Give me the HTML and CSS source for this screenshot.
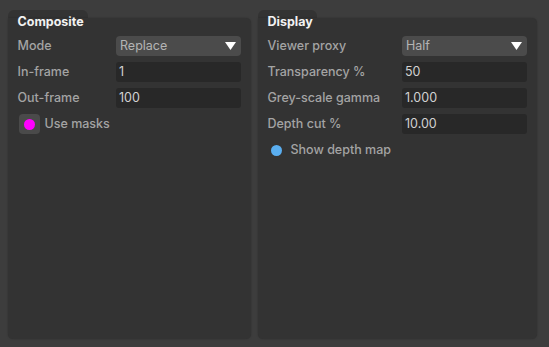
FILE: index.html
```html
<!DOCTYPE html>
<html>
<head>
<meta charset="utf-8">
<link rel="stylesheet" href="styles.css">
</head>
<body>
<div class="wrap">
  <section class="group group-left">
    <div class="tab tab-left"></div>
    <div class="panel">
      <div class="title">Composite</div>
      <div class="rows">
        <div class="row"><span class="label">Mode</span>
          <div class="select"><span>Replace</span>
            <svg class="arrow" width="11" height="8" viewBox="0 0 11 8"><polygon points="0,0 11,0 5.5,8" fill="#ffffff"/></svg>
          </div>
        </div>
        <div class="row"><span class="label">In-frame</span><div class="field">1</div></div>
        <div class="row"><span class="label">Out-frame</span><div class="field">100</div></div>
        <div class="row check-row">
          <span class="checkbox"><span class="dot magenta"></span></span>
          <span class="label">Use masks</span>
        </div>
      </div>
    </div>
  </section>
  <section class="group group-right">
    <div class="tab tab-right"></div>
    <div class="panel">
      <div class="title">Display</div>
      <div class="rows">
        <div class="row"><span class="label">Viewer proxy</span>
          <div class="select"><span>Half</span>
            <svg class="arrow" width="11" height="8" viewBox="0 0 11 8"><polygon points="0,0 11,0 5.5,8" fill="#ffffff"/></svg>
          </div>
        </div>
        <div class="row"><span class="label">Transparency %</span><div class="field">50</div></div>
        <div class="row"><span class="label">Grey-scale gamma</span><div class="field">1.000</div></div>
        <div class="row"><span class="label">Depth cut %</span><div class="field">10.00</div></div>
        <div class="row radio-row">
          <span class="dot blue"></span>
          <span class="label">Show depth map</span>
        </div>
      </div>
    </div>
  </section>
</div>
</body>
</html>
```
FILE: styles.css
```css
html, body {
  margin: 0;
  padding: 0;
  background: #3d3d3d;
  width: 549px;
  height: 347px;
  overflow: hidden;
  font-family: Inter, "Liberation Sans", sans-serif;
  font-size: 12.5px;
}
.wrap {
  display: flex;
  gap: 7px;
  padding: 9.5px 12px 0 8px;
  height: 347px;
  box-sizing: border-box;
}
.group {
  display: flex;
  flex-direction: column;
  height: 329px;
}
.group-left { width: 243px; }
.group-right { width: 279px; }
.tab {
  height: 8px;
  background: #333333;
  border-radius: 6px 6px 0 0;
  flex: none;
}
.tab-left { width: 80px; }
.tab-right { width: 59px; }
.panel {
  flex: 1;
  background: #333333;
  border-radius: 0 5px 5px 5px;
  padding: 0 10px 0 9.5px;
  box-shadow: 0 0 2px rgba(0,0,0,0.25);
}
.title {
  margin-top: -4px;
  height: 16px;
  line-height: 16px;
  color: #f2f2f2;
  font-weight: 700;
}
.rows {
  margin-top: 6.5px;
  display: flex;
  flex-direction: column;
  gap: 6px;
}
.row {
  display: flex;
  align-items: center;
  height: 20px;
}
.label {
  flex: 1;
  color: #a4a4a4;
  font-weight: 500;
  line-height: 20px;
}
.select, .field {
  width: 125px;
  height: 20px;
  box-sizing: border-box;
  line-height: 20px;
  color: #d2d2d2;
}
.select {
  display: flex;
  align-items: center;
  justify-content: space-between;
  background: #4b4b4b;
  border-radius: 4px;
  padding: 0 5px 0 4px;
  color: #b4b4b4;
}
.field {
  background: #282828;
  border-radius: 3px;
  padding: 0 3px;
}
.check-row .checkbox {
  width: 21px;
  height: 20px;
  margin-left: 1px;
  margin-right: 5px;
  background: #4a4a4a;
  border-radius: 4px;
  display: flex;
  align-items: center;
  justify-content: center;
}
.dot {
  width: 11px;
  height: 11px;
  border-radius: 50%;
  display: block;
}
.magenta { background: #ff00ff; }
.blue { background: #5aaef0; margin-left: 3px; margin-right: 9px; }
.check-row .label, .radio-row .label { flex: none; }
```
